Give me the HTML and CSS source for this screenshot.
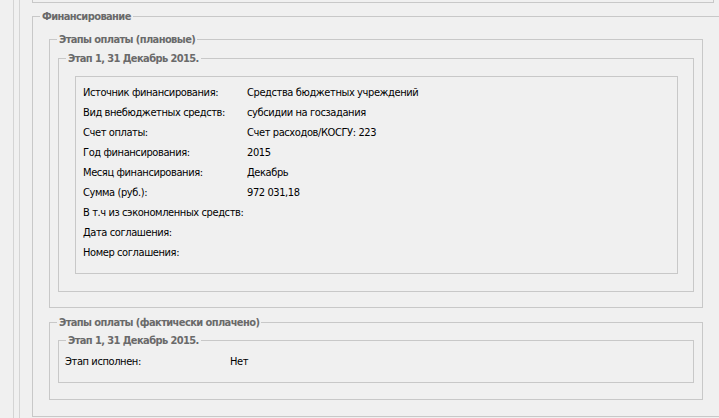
FILE: index.html
```html
<!doctype html>
<html lang="ru">
	<head>
	<meta charset="utf-8">
	<title>Финансирование</title>
	<link rel="stylesheet" href="styles.css">
	</head>
	<body>

		<div class="frame">
			<div class="frame-inner">
				<div class="prev-block"></div>

				<fieldset class="fs fs-main">
					<legend>Финансирование</legend>

					<fieldset class="fs fs-stages">
						<legend>Этапы оплаты (плановые)</legend>

						<fieldset class="fs fs-stage">
							<legend>Этап 1, 31 Декабрь 2015.</legend>

							<div class="details">
								<div class="row"><span class="lbl">Источник финансирования:</span><span class="val">Средства бюджетных учреждений</span></div>
								<div class="row"><span class="lbl">Вид внебюджетных средств:</span><span class="val">субсидии на госзадания</span></div>
								<div class="row"><span class="lbl">Счет оплаты:</span><span class="val">Счет расходов/КОСГУ: 223</span></div>
								<div class="row"><span class="lbl">Год финансирования:</span><span class="val">2015</span></div>
								<div class="row"><span class="lbl">Месяц финансирования:</span><span class="val">Декабрь</span></div>
								<div class="row"><span class="lbl">Сумма (руб.):</span><span class="val">972 031,18</span></div>
								<div class="row"><span class="lbl">В т.ч из сэкономленных средств:</span><span class="val"></span></div>
								<div class="row"><span class="lbl">Дата соглашения:</span><span class="val"></span></div>
								<div class="row"><span class="lbl">Номер соглашения:</span><span class="val"></span></div>
							</div>
						</fieldset>
					</fieldset>

					<fieldset class="fs fs-stages fs-paid">
						<legend>Этапы оплаты (фактически оплачено)</legend>

						<fieldset class="fs fs-stage fs-stage-paid">
							<legend>Этап 1, 31 Декабрь 2015.</legend>
							<div class="row row-paid"><span class="lbl">Этап исполнен:</span><span class="val">Нет</span></div>
						</fieldset>
					</fieldset>
				</fieldset>
			</div>
		</div>

	</body>
</html>
```

FILE: styles.css
```css
html, body {
	margin: 0;
	padding: 0;
	height: 100%;
	overflow: hidden;
	background-color: #f0f0f0;
}

body {
	font-family: "DejaVu Sans Condensed", "DejaVu Sans", sans-serif;
	font-size: 11px;
	letter-spacing: -0.4px;
	color: #000;
}

.frame {
	margin-left: 13px;
	height: 418px;
	border-left: 1px solid #d4d4d4;
}

.frame-inner {
	margin-left: 5px;
	height: 418px;
	width: 720px;
	padding-left: 12px;
	border-left: 1px solid #d4d4d4;
}

.prev-block {
	box-sizing: border-box;
	width: 682px;
	height: 3px;
	border: 1px solid #c8c8c8;
	border-top: none;
}

/* fieldsets */
.fs {
	margin: 0;
	padding: 0;
	min-width: 0;
	border: 1px solid #c8c8c8;
}

.fs > legend {
	margin-left: 7px;
	padding: 0 2px;
	height: 13px;
	line-height: 13px;
	font-weight: bold;
	letter-spacing: -0.6px;
	color: #6a6a6a;
}

.fs-main {
	margin-top: 7px;
	width: 720px;
	padding-bottom: 16px;
}

.fs-stages {
	box-sizing: border-box;
	width: 654px;
	margin: 10px 0 0 16px;
	padding-bottom: 15px;
}

.fs-paid {
	margin-top: 8px;
	padding-bottom: 16px;
}

.fs-stage {
	margin: 6px 8px 0 8px;
	padding-bottom: 17px;
}

.fs-stage-paid {
	margin-top: 5px;
	padding: 5px 0 10px 0;
}

/* rows */
.details {
	margin: 11px 15px 0 16px;
	padding: 6px 0 10px 7px;
	border: 1px solid #c8c8c8;
}

.row {
	display: flex;
	height: 20px;
	line-height: 20px;
	white-space: nowrap;
}

.lbl {
	width: 164px;
	flex: none;
}

.row-paid {
	padding-left: 6px;
}

.row-paid .lbl {
	width: 165px;
}
```
